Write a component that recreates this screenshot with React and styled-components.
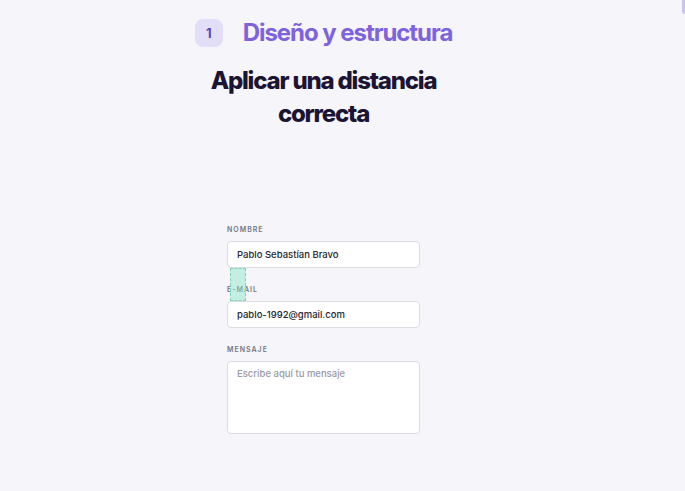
import React from "react";
import styled, { createGlobalStyle } from "styled-components";

const GlobalStyle = createGlobalStyle`
  html, body {
    margin: 0;
    padding: 0;
    background: #f5f5fa;
    font-family: Inter, "Liberation Sans", sans-serif;
  }
`;

const Page = styled.div`
  position: relative;
  width: 685px;
  height: 491px;
  overflow: hidden;
  background: #f5f5fa;
`;

const EdgeTab = styled.div`
  position: absolute;
  top: 0;
  right: 0;
  width: 3px;
  height: 14px;
  background: #c9c3f5;
  border-bottom-left-radius: 3px;
`;

const Column = styled.div`
  width: 647px;
  display: flex;
  flex-direction: column;
  align-items: center;
  padding-top: 18px;
`;

const StepRow = styled.div`
  display: flex;
  align-items: center;
  gap: 20px;
`;

const StepBadge = styled.div`
  width: 28px;
  height: 28px;
  border-radius: 8px;
  background: #e2def8;
  color: #5a45b8;
  font-size: 13px;
  font-weight: 700;
  display: flex;
  align-items: center;
  justify-content: center;
`;

const StepTitle = styled.h2`
  margin: 0;
  font-size: 24px;
  font-weight: 700;
  letter-spacing: -1.05px;
  color: #7e63dc;
`;

const Heading = styled.h1`
  margin: 17px 0 0;
  width: 240px;
  text-align: center;
  font-size: 24px;
  line-height: 33px;
  font-weight: 800;
  letter-spacing: -1.2px;
  color: #1c1433;
`;

const Form = styled.form`
  margin-top: 95px;
  width: 193px;
  display: flex;
  flex-direction: column;
`;

const Field = styled.div`
  position: relative;
  display: flex;
  flex-direction: column;
  margin-bottom: 17px;
`;

const Label = styled.label`
  font-size: 7px;
  font-weight: 600;
  letter-spacing: 1px;
  color: #75757e;
  margin-bottom: 6px;
  line-height: 10px;
`;

const Input = styled.div`
  box-sizing: border-box;
  height: ${(p) => (p.$tall ? "73px" : "27px")};
  background: #fff;
  border: 1px solid #dcdce2;
  border-radius: 4px;
  padding: ${(p) => (p.$tall ? "6px 9px" : "0 9px")};
  display: flex;
  align-items: ${(p) => (p.$tall ? "flex-start" : "center")};
  font-size: 9.5px;
  font-weight: 500;
  color: ${(p) => (p.$placeholder ? "#9a9aa3" : "#26262e")};
`;

const SpacingGuide = styled.div`
  position: absolute;
  left: 3px;
  top: -17px;
  box-sizing: border-box;
  width: 16px;
  height: 33px;
  background: rgba(140, 230, 200, 0.45);
  border: 1px dashed #7fd3b6;
`;

export default function App() {
  return (
    <Page>
      <GlobalStyle />
      <EdgeTab />
      <Column>
        <StepRow>
          <StepBadge>1</StepBadge>
          <StepTitle>Diseño y estructura</StepTitle>
        </StepRow>
        <Heading>Aplicar una distancia correcta</Heading>
        <Form>
          <Field>
            <Label>NOMBRE</Label>
            <Input>Pablo Sebastían Bravo</Input>
          </Field>
          <Field>
            <SpacingGuide />
            <Label>E-MAIL</Label>
            <Input>pablo-1992@gmail.com</Input>
          </Field>
          <Field>
            <Label>MENSAJE</Label>
            <Input $tall $placeholder>
              Escribe aquí tu mensaje
            </Input>
          </Field>
        </Form>
      </Column>
    </Page>
  );
}
